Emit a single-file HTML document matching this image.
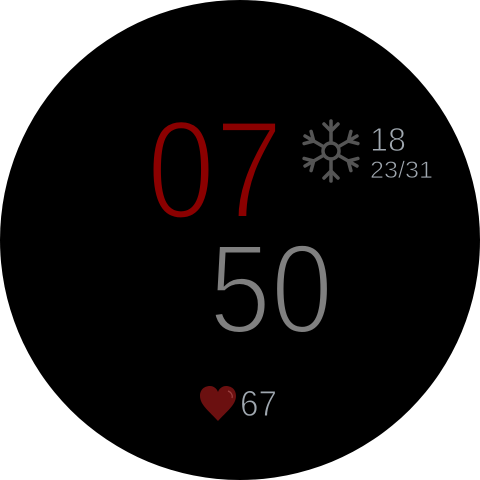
<!DOCTYPE html>
<html><head><meta charset="utf-8"><style>
html,body{margin:0;padding:0;background:#fff;width:480px;height:480px;overflow:hidden}
svg{display:block}
text{font-family:"Liberation Sans",sans-serif}
</style></head><body>
<svg width="480" height="480" viewBox="0 0 480 480">
<circle cx="240" cy="240" r="240" fill="#000"/>
<text x="147" y="218" font-size="140" fill="#8b0000" stroke="#000" stroke-width="4" textLength="136" lengthAdjust="spacingAndGlyphs">07</text>
<text x="209" y="333" font-size="127" fill="#808080" stroke="#000" stroke-width="4" textLength="124" lengthAdjust="spacingAndGlyphs">50</text>
<text x="370" y="151" font-size="33" fill="#a0a8b0" stroke="#000" stroke-width="1" textLength="36" lengthAdjust="spacingAndGlyphs">18</text>
<text x="370" y="178" font-size="24" fill="#a0a8b0" stroke="#000" stroke-width="0.7" textLength="63" lengthAdjust="spacingAndGlyphs">23/31</text>
<text x="240" y="416" font-size="36" fill="#a0a8b0" stroke="#000" stroke-width="1" textLength="37" lengthAdjust="spacingAndGlyphs">67</text>
<g transform="translate(331,151)" stroke="#555" stroke-width="3.5" fill="none" stroke-linecap="round">
<circle r="8"/>
<g id="arm"><line x1="0" y1="-8" x2="0" y2="-30"/><line x1="0" y1="-20" x2="-7" y2="-27"/><line x1="0" y1="-20" x2="7" y2="-27"/></g>
<use href="#arm" transform="rotate(60)"/>
<use href="#arm" transform="rotate(120)"/>
<use href="#arm" transform="rotate(180)"/>
<use href="#arm" transform="rotate(240)"/>
<use href="#arm" transform="rotate(300)"/>
</g>
<path d="M218 421 C210 412 200 405 200 396 C200 389 205 386 210 386 C214 386 217 389 218 392 C219 389 222 386 226 386 C231 386 236 389 236 396 C236 405 226 412 218 421 Z" fill="#6b1010"/>
<path d="M228 391 C231 392 233 395 232 398" stroke="#9a4040" stroke-width="1.2" fill="none"/>
</svg>
</body></html>
